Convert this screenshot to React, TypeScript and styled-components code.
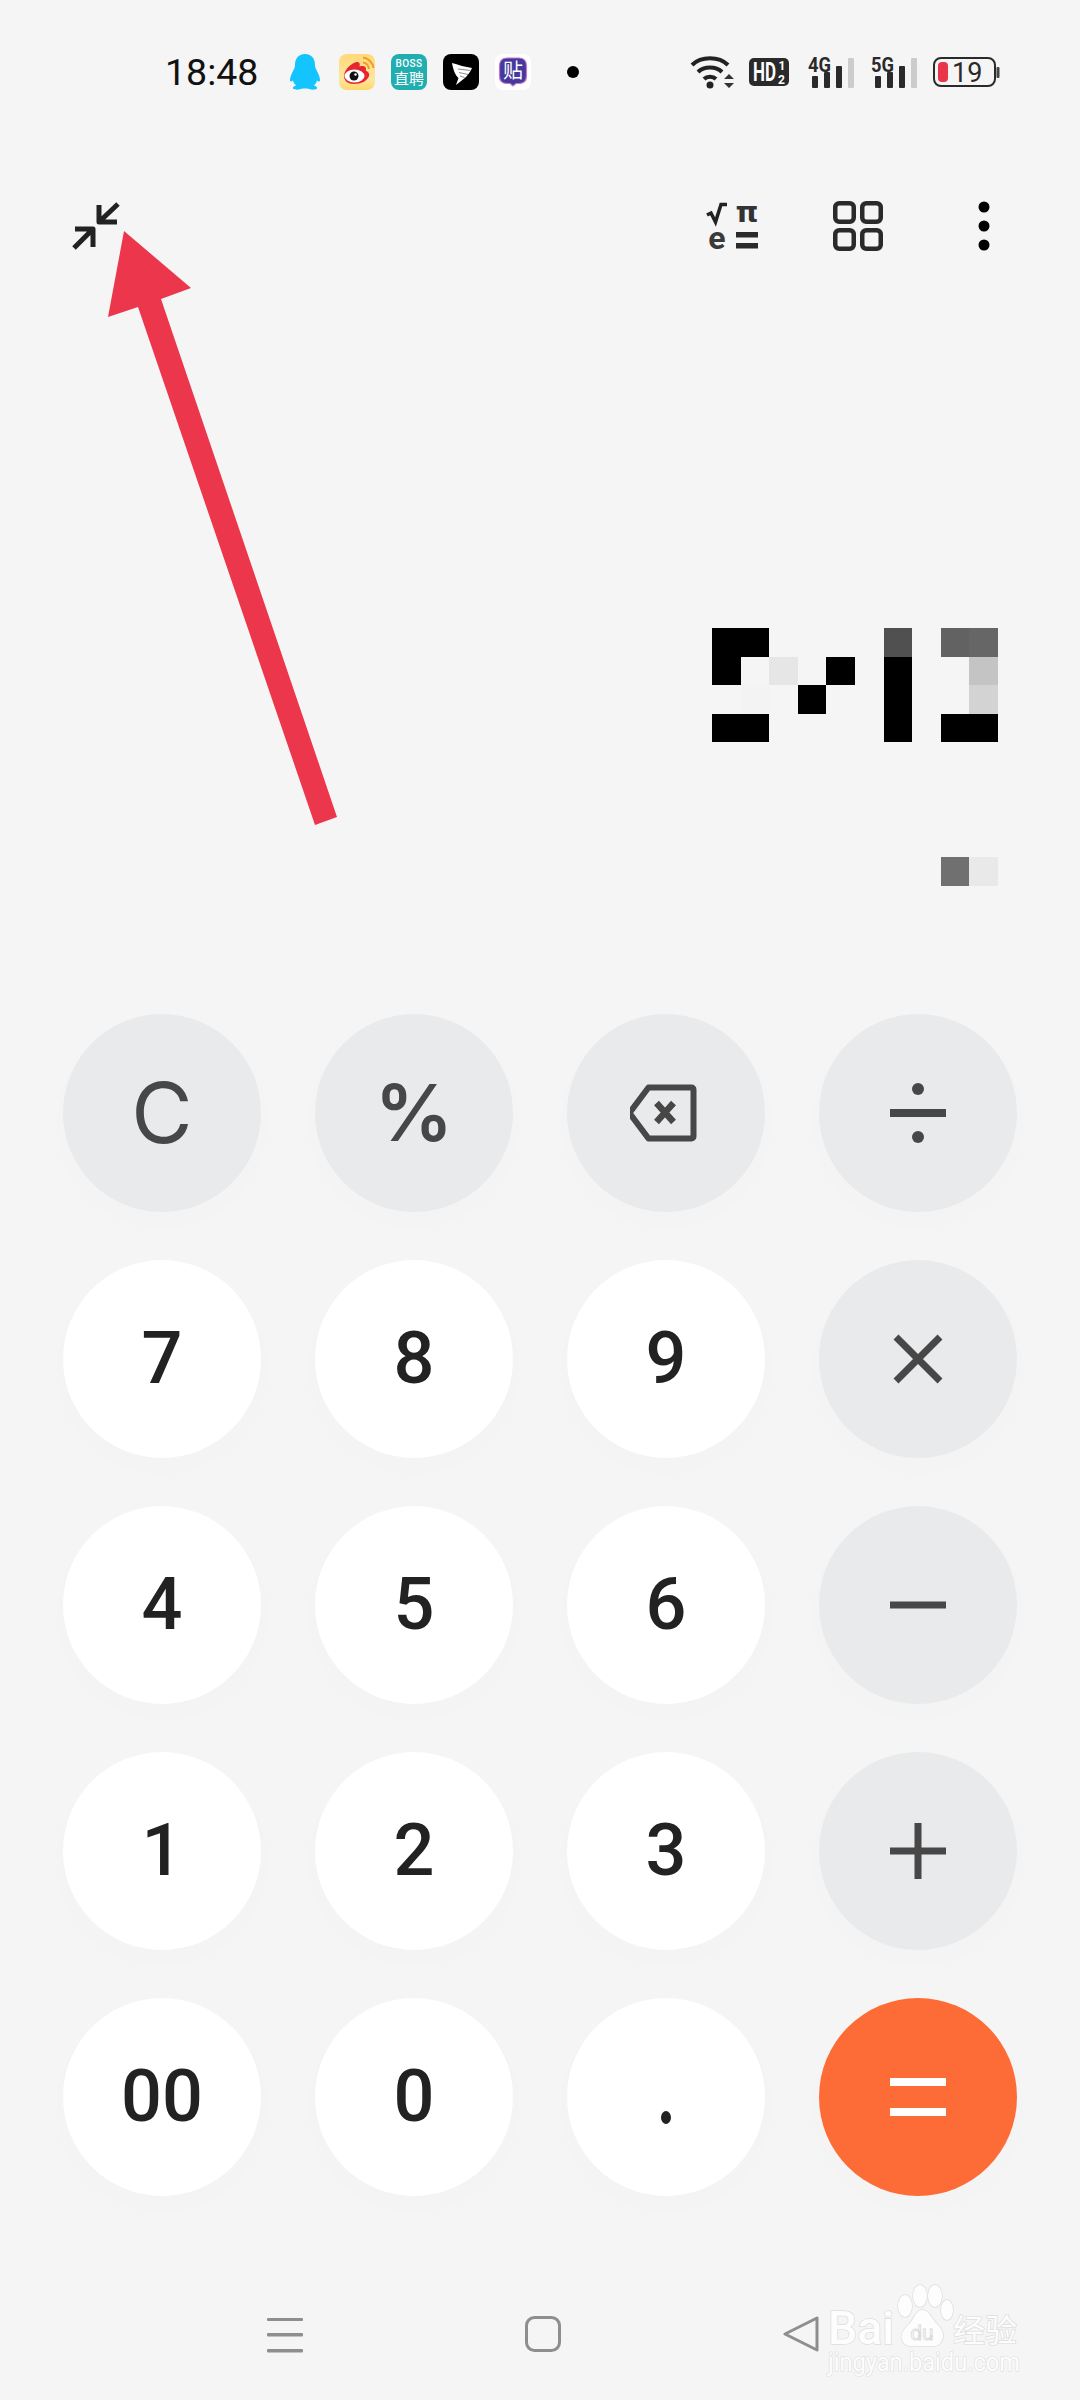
import React from 'react';
import styled, {createGlobalStyle} from 'styled-components';

const colors = {
    page: '#f5f5f5',
    func: '#e9eaec',
    ink: '#222222',
    funcInk: '#474747',
    equal: '#fd6c37',
    nav: '#8e8e8e',
    arrow: '#ec364b',
};

const GlobalStyle = createGlobalStyle`
  html, body {
    margin: 0;
    padding: 0;
    background: ${colors.page};
    font-family: Roboto, "Noto Sans CJK SC", sans-serif;
  }
`;

const Page = styled.div`
  position: relative;
  width: 1080px;
  height: 2400px;
  overflow: hidden;
  display: flex;
  flex-direction: column;
  background: ${colors.page};
`;

/* ---------- status bar ---------- */

const StatusBar = styled.div`
  height: 144px;
  flex: none;
  display: flex;
  align-items: center;
  justify-content: space-between;
  padding: 0 80px 0 165px;
`;

const StatusGroup = styled.div`
  display: flex;
  align-items: center;
`;

const Time = styled.span`
  width: 93px;
  margin-right: 32px;
  font-size: 37.5px;
  line-height: 36px;
  color: #111;
  white-space: nowrap;
`;

const AppTile = styled.span<{ $bg?: string }>`
  width: 36px;
  height: 36px;
  margin-right: 16px;
  border-radius: 8px;
  background: ${p => p.$bg ?? 'transparent'};
  display: block;
  flex: none;
  overflow: hidden;
`;

const QqTile = styled(AppTile)`
  width: 32px;
  margin-left: -1px;
  margin-right: 18px;
`;

const LastTile = styled(AppTile)`
  margin-right: 0;
`;

const BossTile = styled(AppTile)`
  display: flex;
  flex-direction: column;
  align-items: center;
  justify-content: center;
  color: #fff;
  line-height: 1;
  font-family: "Noto Sans CJK SC", sans-serif;
`;

const BossLatin = styled.span`
  font-family: Roboto, sans-serif;
  font-size: 10px;
  font-weight: 500;
  letter-spacing: 0.4px;
  margin-bottom: 1px;
`;

const BossCjk = styled.span`
  font-size: 15px;
  line-height: 15px;
`;

const NoticeDot = styled.span`
  width: 12px;
  height: 12px;
  margin-left: 36px;
  border-radius: 50%;
  background: #000;
`;

const StatusSvg = styled.svg<{ $gap?: number }>`
  display: block;
  flex: none;
  overflow: visible;
  margin-left: ${p => p.$gap ?? 0}px;
`;

const SignalIcon: React.FC<{ label: string; gap: number }> = ({label, gap}) => (
    <StatusSvg $gap={gap} width="46" height="33" viewBox="0 0 46 33">
        <text x="0" y="16" fontFamily="Roboto" fontWeight="700" fontSize="21" fill="#2a2a2a"
              textLength="23" lengthAdjust="spacingAndGlyphs">{label}</text>
        <rect x="4" y="20" width="6" height="12" rx="1" fill="#2a2a2a"/>
        <rect x="16" y="16" width="6" height="16" rx="1" fill="#2a2a2a"/>
        <rect x="28" y="10" width="6" height="22" rx="1" fill="#2a2a2a"/>
        <rect x="40" y="2" width="6" height="30" rx="1" fill="#cccccc"/>
    </StatusSvg>
);

/* ---------- tool bar ---------- */

const ToolBar = styled.div`
  height: 164px;
  flex: none;
  display: flex;
  align-items: center;
  justify-content: space-between;
  padding: 0 72px;
`;

const ToolGroup = styled.div`
  display: flex;
  align-items: center;
  gap: 75px;
`;

const ToolSvg = styled.svg`
  display: block;
  overflow: visible;
`;

/* ---------- display ---------- */

const Display = styled.div`
  height: 706px;
  flex: none;
  box-sizing: border-box;
  padding: 320px 82px 0 0;
  display: flex;
  flex-direction: column;
  align-items: flex-end;
`;

const Mosaic = styled.div`
  display: grid;
  grid-template-columns: repeat(10, 28.6px);
  grid-auto-rows: 28.5px;
`;

const MosaicCell = styled.span<{ $tone: string }>`
  background: ${p => p.$tone};
`;

const ResultMosaic = styled(Mosaic)`
  margin-top: 115px;
`;

const bigMosaic = [
    ['#000', '#000', '', '', '', '', '#505050', '', '#626262', '#666666'],
    ['#000', '', '#e6e6e6', '', '#000', '', '#000', '', '', '#c4c4c4'],
    ['', '#f3f3f3', '', '#000', '', '', '#000', '', '', '#d3d3d3'],
    ['#000', '#000', '', '', '', '', '#000', '', '#000', '#000'],
];

const smallMosaic = [
    ['', '', '', '', '', '', '', '', '#707070', '#e9e9e9'],
];

/* ---------- keypad ---------- */

const Keypad = styled.div`
  flex: none;
  display: grid;
  grid-template-columns: repeat(4, 198px);
  grid-auto-rows: 198px;
  column-gap: 54px;
  row-gap: 48px;
  padding-left: 63px;
`;

type KeyKind = 'num' | 'func' | 'equal';

const keyBackground: Record<KeyKind, string> = {
    num: '#ffffff',
    func: colors.func,
    equal: colors.equal,
};

const Key = styled.div<{ $kind: KeyKind }>`
  border-radius: 50%;
  display: flex;
  align-items: center;
  justify-content: center;
  background: ${p => keyBackground[p.$kind]};
  color: ${p => (p.$kind === 'num' ? colors.ink : colors.funcInk)};
  box-shadow: 0 10px 36px rgba(0, 0, 0, 0.012);
  font-size: 72px;
  font-weight: 500;
  line-height: 1;
`;

const ClearLabel = styled.span`
  font-family: Inter, Roboto, sans-serif;
  font-size: 84px;
  font-weight: 400;
`;

const PercentLabel = styled.span`
  font-family: Inter, Roboto, sans-serif;
  font-size: 78px;
  font-weight: 600;
`;

const DotMark = styled.span`
  width: 10px;
  height: 13px;
  margin-top: 40px;
  border-radius: 50%;
  background: ${colors.ink};
`;

const GlyphSvg = styled.svg`
  display: block;
`;

const Glyph: React.FC<{ size?: number; box?: string; children: React.ReactNode }> = ({size = 56, box = '0 0 56 56', children}) => (
    <GlyphSvg width={size} height={size} viewBox={box} fill="none">{children}</GlyphSvg>
);

const BackspaceGlyph = () => (
    <Glyph size={72} box="4.500 1 72 72">
        <path d="M23 11.500H66a2 2 0 0 1 2 2V60.500a2 2 0 0 1-2 2H23L4 37Z" stroke={colors.funcInk} strokeWidth="6" strokeLinejoin="round"/>
        <path d="M31 27L48 46M48 27L31 46" stroke={colors.funcInk} strokeWidth="6.500"/>
    </Glyph>
);

const DivideGlyph = () => (
    <Glyph size={60} box="0 0 56 60">
        <rect y="26" width="56" height="8" fill={colors.funcInk}/>
        <circle cx="28" cy="6" r="6" fill={colors.funcInk}/>
        <circle cx="28" cy="54" r="6" fill={colors.funcInk}/>
    </Glyph>
);

const TimesGlyph = () => (
    <Glyph>
        <path d="M6 6L50 50M50 6L6 50" stroke={colors.funcInk} strokeWidth="7"/>
    </Glyph>
);

const MinusGlyph = () => (
    <Glyph>
        <rect y="24.500" width="56" height="7" fill={colors.funcInk}/>
    </Glyph>
);

const PlusGlyph = () => (
    <Glyph>
        <rect y="24.500" width="56" height="7" fill={colors.funcInk}/>
        <rect x="24.500" width="7" height="56" fill={colors.funcInk}/>
    </Glyph>
);

const EqualGlyph = () => (
    <Glyph>
        <rect y="9" width="56" height="8" fill="#fff"/>
        <rect y="39" width="56" height="8" fill="#fff"/>
    </Glyph>
);

const keys: { kind: KeyKind; content: React.ReactNode }[] = [
    {kind: 'func', content: <ClearLabel>C</ClearLabel>},
    {kind: 'func', content: <PercentLabel>%</PercentLabel>},
    {kind: 'func', content: <BackspaceGlyph/>},
    {kind: 'func', content: <DivideGlyph/>},
    {kind: 'num', content: '7'},
    {kind: 'num', content: '8'},
    {kind: 'num', content: '9'},
    {kind: 'func', content: <TimesGlyph/>},
    {kind: 'num', content: '4'},
    {kind: 'num', content: '5'},
    {kind: 'num', content: '6'},
    {kind: 'func', content: <MinusGlyph/>},
    {kind: 'num', content: '1'},
    {kind: 'num', content: '2'},
    {kind: 'num', content: '3'},
    {kind: 'func', content: <PlusGlyph/>},
    {kind: 'num', content: '00'},
    {kind: 'num', content: '0'},
    {kind: 'num', content: <DotMark aria-label="."/>},
    {kind: 'equal', content: <EqualGlyph/>},
];

/* ---------- navigation ---------- */

const NavBar = styled.div`
  flex: 1;
  display: flex;
  align-items: flex-start;
  padding: 119px 0 0 267px;
`;

const NavSvg = styled.svg<{ $gap?: number }>`
  display: block;
  margin-left: ${p => p.$gap ?? 0}px;
`;

/* ---------- overlays ---------- */

const ArrowOverlay = styled.svg`
  position: absolute;
  left: 0;
  top: 0;
  pointer-events: none;
`;

const Watermark = styled.svg`
  position: absolute;
  left: 825px;
  top: 2280px;
`;

const wmText = {fill: '#fdfdfd', stroke: '#dedede', strokeWidth: 1.5, paintOrder: 'stroke'} as const;

const App: React.FC = () => {
    return (
        <Page>
            <GlobalStyle/>
            <StatusBar>
                <StatusGroup>
                    <Time>18:48</Time>
                    {/* qq */}
                    <QqTile>
                        <svg width="32" height="36" viewBox="0 0 32 36">
                            <path fill="#14c4ff"
                                  d="M16 0C9 0 6 5 6 11C6 13 5.500 14 4.500 16C3 19 1 23 1 26C1 28 2.500 28 4 26.500C4.500 28.500 5.500 30 7 31.500C5 32 3.500 33 4 34.500C4.500 36 9 36 12 35C13 34.600 14 34.500 16 34.500C18 34.500 19 34.600 20 35C23 36 27.500 36 28 34.500C28.500 33 27 32 25 31.500C26.500 30 27.500 28.500 28 26.500C29.500 28 31 28 31 26C31 23 29 19 27.500 16C26.500 14 26 13 26 11C26 5 23 0 16 0Z"/>
                        </svg>
                    </QqTile>
                    {/* weibo */}
                    <AppTile $bg="linear-gradient(180deg,#ffd978,#ffe7a0 70%,#ffd66b)">
                        <svg width="36" height="36" viewBox="0 0 36 36">
                            <path fill="#e6262e"
                                  d="M5 22C5 17 10 11 16 8.500C20 7 21.500 9 20.500 12.500C24 11.500 27 12 27 15C27 16 26.500 16.500 27.500 17C30 18 30.500 20 30 22C28.500 27 22 30 15 30C9 30 5 27 5 22Z"/>
                            <ellipse cx="15.500" cy="22" rx="10" ry="6.500" fill="#fff"/>
                            <circle cx="15" cy="22" r="4.500" fill="#111"/>
                            <circle cx="16.500" cy="20.500" r="1.200" fill="#fff"/>
                            <path d="M24 8.500A7 7 0 0 1 30 15M24 3.500A12 12 0 0 1 34.500 14" fill="none" stroke="#f39a26" strokeWidth="2"/>
                        </svg>
                    </AppTile>
                    <BossTile $bg="#21aeb0">
                        <BossLatin>BOSS</BossLatin>
                        <BossCjk>直聘</BossCjk>
                    </BossTile>
                    {/* wing app */}
                    <AppTile $bg="#000">
                        <svg width="36" height="36" viewBox="0 0 36 36">
                            <path fill="#fff" d="M9 9C13 10 16 11 19 12L29 14L27.500 17L25.500 20L22.500 23.500L13 31L15.500 24C12 21 10 15 9 9Z"/>
                            <path d="M15 15L27 16.500M16 18.500L25 20.500M17 22L21.500 23.500" stroke="#8a8a8a" strokeWidth="1" fill="none"/>
                        </svg>
                    </AppTile>
                    {/* tieba */}
                    <LastTile $bg="#fff">
                        <svg width="36" height="36" viewBox="0 0 36 36">
                            <path fill="#46399e" stroke="#c07ac8" strokeWidth="1.200"
                                  d="M12 4H24C29 4 31.500 7 31.500 12V22C31.500 27 29 29.500 24 29.500H21L18 32L15 29.500H12C7 29.500 4.500 27 4.500 22V12C4.500 7 7 4 12 4Z"/>
                            <text x="18" y="24" textAnchor="middle" fontFamily="Noto Sans CJK SC" fontSize="20" fill="#fff">贴</text>
                        </svg>
                    </LastTile>
                    <NoticeDot/>
                </StatusGroup>
                <StatusGroup>
                    {/* wifi */}
                    <StatusSvg width="45" height="34" viewBox="0 0 45 34">
                        <g fill="none" stroke="#222" strokeWidth="4">
                            <path d="M2 10C11 1 29 1 38 10"/>
                            <path d="M8 17C14 11 26 11 32 17"/>
                            <path d="M14 24C17 21 23 21 26 24"/>
                        </g>
                        <circle cx="20" cy="30" r="3.500" fill="#222"/>
                        <path d="M34 24L39 19L44 24ZM34 28H44L39 33Z" fill="#333"/>
                    </StatusSvg>
                    {/* hd */}
                    <StatusSvg $gap={14} width="40" height="28" viewBox="0 0 40 28">
                        <rect width="40" height="28" rx="5" fill="#2a2a2a"/>
                        <text x="4" y="23" fontFamily="Roboto" fontWeight="700" fontSize="26" fill="#fff"
                              textLength="23" lengthAdjust="spacingAndGlyphs">HD</text>
                        <text x="29.500" y="11.500" fontFamily="Roboto" fontWeight="700" fontSize="12" fill="#fff">1</text>
                        <text x="29" y="25.500" fontFamily="Roboto" fontWeight="700" fontSize="12" fill="#fff">2</text>
                    </StatusSvg>
                    <SignalIcon label="4G" gap={19}/>
                    <SignalIcon label="5G" gap={17}/>
                    {/* battery */}
                    <StatusSvg $gap={16} width="67" height="31" viewBox="0 0 67 31">
                        <rect x="1" y="1" width="61" height="28" rx="7" fill="none" stroke="#2a2a2a" strokeWidth="2"/>
                        <rect x="5" y="5" width="10" height="20" rx="4" fill="#e8354a"/>
                        <rect x="63.500" y="10" width="3" height="11" rx="1" fill="#444"/>
                        <text x="19" y="25" fontFamily="Roboto" fontSize="27" fill="#2a2a2a">19</text>
                    </StatusSvg>
                </StatusGroup>
            </StatusBar>

            <ToolBar>
                {/* collapse */}
                <ToolSvg width="48" height="48" viewBox="0 0 48 48" fill="none" stroke="#222" strokeWidth="5">
                    <path d="M46 2L27 20M45 20H27V3" strokeLinejoin="round"/>
                    <path d="M2 46L21 27M3 27H21V45" strokeLinejoin="round"/>
                </ToolSvg>
                <ToolGroup>
                    {/* scientific */}
                    <ToolSvg width="52" height="48" viewBox="0 0 52 48">
                        <path d="M1 13L5 11L9.500 20L15 2.500H21" fill="none" stroke="#222" strokeWidth="3.500"/>
                        <text x="41" y="20" textAnchor="middle" fontFamily="DejaVu Sans" fontWeight="700" fontSize="29" fill="#333">π</text>
                        <text x="11" y="47" textAnchor="middle" fontFamily="Roboto" fontWeight="700" fontSize="32" fill="#3a3a3a">e</text>
                        <rect x="30" y="30" width="22" height="5.500" fill="#2a2a2a"/>
                        <rect x="30" y="41" width="22" height="5.500" fill="#2a2a2a"/>
                    </ToolSvg>
                    {/* grid */}
                    <ToolSvg width="50" height="50" viewBox="0 0 50 50" fill="none" stroke="#2a2a2a" strokeWidth="4.500">
                        <rect x="2.250" y="2.250" width="18.500" height="18.500" rx="4"/>
                        <rect x="29.250" y="2.250" width="18.500" height="18.500" rx="4"/>
                        <rect x="2.250" y="29.250" width="18.500" height="18.500" rx="4"/>
                        <rect x="29.250" y="29.250" width="18.500" height="18.500" rx="4"/>
                    </ToolSvg>
                    {/* more */}
                    <ToolSvg width="50" height="50" viewBox="0 0 50 50" fill="#000">
                        <circle cx="26" cy="6" r="5.500"/>
                        <circle cx="26" cy="25" r="5.500"/>
                        <circle cx="26" cy="44" r="5.500"/>
                    </ToolSvg>
                </ToolGroup>
            </ToolBar>

            <Display>
                <Mosaic>
                    {bigMosaic.flat().map((tone, index) => <MosaicCell key={index} $tone={tone || 'transparent'}/>)}
                </Mosaic>
                <ResultMosaic>
                    {smallMosaic.flat().map((tone, index) => <MosaicCell key={index} $tone={tone || 'transparent'}/>)}
                </ResultMosaic>
            </Display>

            <Keypad>
                {keys.map((key, index) => <Key key={index} $kind={key.kind}>{key.content}</Key>)}
            </Keypad>

            <NavBar>
                <NavSvg width="36" height="38" viewBox="0 0 36 38" fill={colors.nav}>
                    <rect y="3" width="36" height="3" rx="1"/>
                    <rect y="18" width="36" height="3.500" rx="1"/>
                    <rect y="34" width="36" height="3.500" rx="1"/>
                </NavSvg>
                <NavSvg $gap={222} width="36" height="38" viewBox="0 0 36 38" fill="none" stroke={colors.nav} strokeWidth="3">
                    <rect x="1.500" y="2.500" width="33" height="33" rx="8"/>
                </NavSvg>
                <NavSvg $gap={222} width="36" height="38" viewBox="0 0 36 38" fill="none" stroke={colors.nav} strokeWidth="3" strokeLinejoin="round">
                    <path d="M2 19L34 3V35Z"/>
                </NavSvg>
            </NavBar>

            {/* annotation drawn over the app */}
            <ArrowOverlay width="1080" height="900" viewBox="0 0 1080 900">
                <polygon fill={colors.arrow} points="124,231 191,288 161,299 337,817 315,825 138,307 108,317"/>
            </ArrowOverlay>

            {/* watermark */}
            <Watermark width="200" height="115" viewBox="0 0 200 115">
                <text x="3" y="64" fontFamily="Roboto" fontWeight="500" fontSize="46" {...wmText}
                      textLength="66" lengthAdjust="spacingAndGlyphs">Bai</text>
                <g {...wmText}>
                    <ellipse cx="80" cy="26" rx="7" ry="11"/>
                    <ellipse cx="95" cy="16" rx="7" ry="11"/>
                    <ellipse cx="110" cy="16" rx="7" ry="11"/>
                    <ellipse cx="122" cy="30" rx="6" ry="10"/>
                    <path d="M97 30C104 30 106 38 112 44C118 50 120 56 116 62C112 68 104 66 97 66C90 66 82 68 78 62C74 56 78 50 84 44C90 38 91 30 97 30Z"/>
                </g>
                <text x="97" y="60" textAnchor="middle" fontFamily="Roboto" fontSize="21" fill="#fdfdfd" stroke="#d8d8d8" strokeWidth="0.800">du</text>
                <text x="128" y="62" fontFamily="Noto Sans CJK SC" fontSize="32" {...wmText}>经验</text>
                <text x="3" y="91" fontFamily="Roboto" fontSize="25" fill="#fdfdfd" stroke="#dddddd" strokeWidth="1.200" paintOrder="stroke"
                      textLength="192" lengthAdjust="spacingAndGlyphs">jingyan.baidu.com</text>
            </Watermark>
        </Page>
    );
};

export default App;
